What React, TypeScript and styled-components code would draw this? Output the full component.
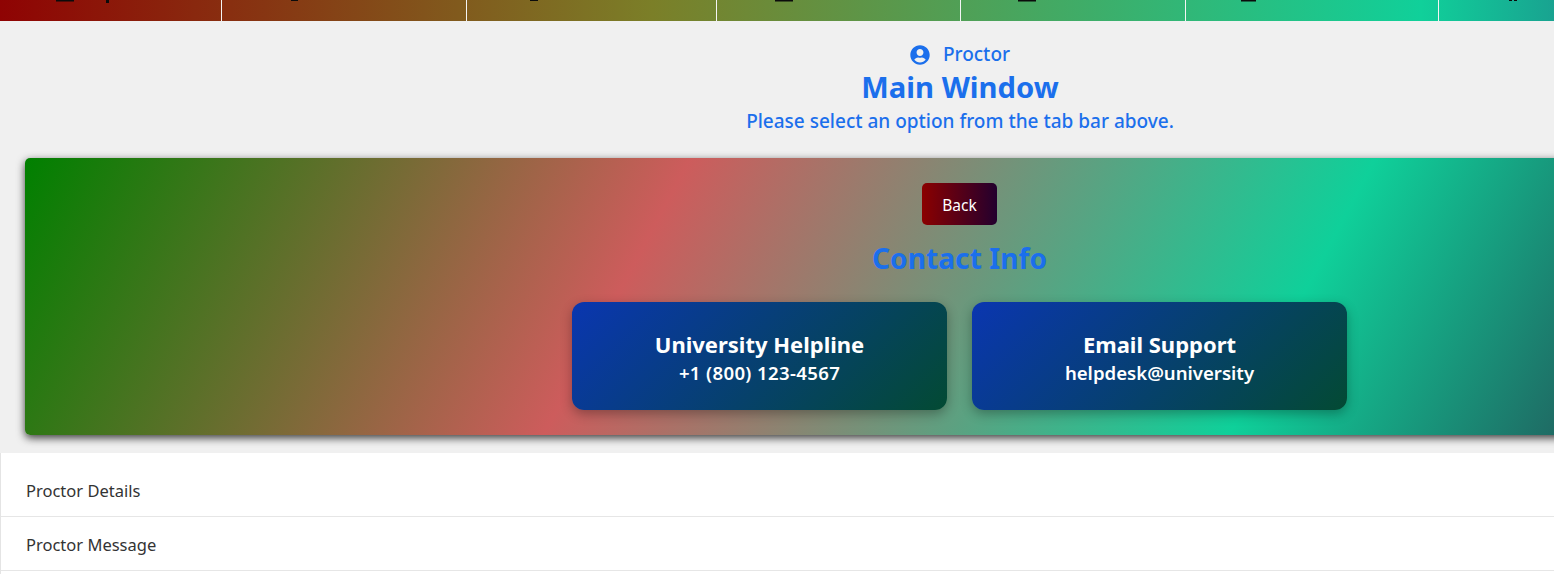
import React from "react";
import styled, { createGlobalStyle } from "styled-components";

const Global = createGlobalStyle`
  html, body { margin: 0; padding: 0; overflow: hidden; background: #f0f0f0; }
  body { font-family: "Noto Sans", "Open Sans", sans-serif; }
`;

const Page = styled.div`
  width: 1920px;
  height: 574px;
  overflow: hidden;
  background: #f0f0f0;
`;

const TabBar = styled.nav`
  display: flex;
  height: 21px;
  overflow: hidden;
  background: linear-gradient(91deg, #8f0303 0%, #7b7f28 34%, #10d09a 74%, #1a9c8f 82%, #14554f 100%);
`;

const Tab = styled.div<{ $w: number; $pad: number }>`
  flex: 0 0 ${(p) => p.$w}px;
  box-sizing: border-box;
  height: 21px;
  padding-left: ${(p) => p.$pad}px;
  border-right: 1px solid #f4f4f4;
  display: flex;
  align-items: flex-start;
  color: #111;
`;

const Sliver = styled.svg`
  display: block;
  width: 60px;
  height: 3px;
  fill: #0b0b0b;
`;

const Intro = styled.header`
  display: flex;
  flex-direction: column;
  align-items: center;
  padding-top: 20px;
  height: 137px;
  box-sizing: border-box;
  color: #1b6fec;
`;

const Role = styled.div`
  display: flex;
  align-items: center;
  gap: 13px;
  font-size: 19px;
  line-height: 27px;
  font-weight: 500;
  height: 27px;
`;

const Title = styled.h1`
  margin: -1px 0 0;
  font-size: 29.2px;
  line-height: 40px;
  font-weight: 700;
`;

const Subtitle = styled.p`
  margin: 1px 0 0;
  font-size: 19px;
  line-height: 26px;
  font-weight: 500;
`;

const Banner = styled.section`
  margin: 0 26px 0 25px;
  height: 277px;
  border-radius: 5px;
  box-sizing: border-box;
  padding-top: 25px;
  display: flex;
  flex-direction: column;
  align-items: center;
  background: linear-gradient(118deg, #008000 0%, #cd5c5c 33%, #0fd09a 67%, #2f022c 100%);
  box-shadow: 0 3px 9px rgba(0, 0, 0, 0.75);
`;

const BackButton = styled.button`
  width: 75px;
  height: 42px;
  border: none;
  border-radius: 5px;
  padding: 2px 0 0;
  color: #fff;
  font-family: inherit;
  font-size: 15.5px;
  background: linear-gradient(90deg, #8b0000, #23002e);
`;

const ContactTitle = styled.h2`
  margin: 11px 0 22px;
  color: #1b6fec;
  font-size: 28.2px;
  line-height: 44px;
  font-weight: 700;
`;

const Cards = styled.div`
  display: flex;
  gap: 25px;
`;

const Card = styled.article`
  width: 375px;
  height: 108px;
  border-radius: 12px;
  box-sizing: border-box;
  padding-top: 27px;
  text-align: center;
  color: #fff;
  background: linear-gradient(135deg, #0a36b0, #034a33);
  box-shadow: 0 4px 12px rgba(0, 0, 0, 0.3);
`;

const CardTitle = styled.h3`
  margin: 0;
  font-size: 22px;
  line-height: 30px;
  font-weight: 700;
`;

const CardText = styled.p<{ $spread?: boolean }>`
  margin: 0;
  font-size: 18.6px;
  line-height: 28px;
  font-weight: 600;
  letter-spacing: ${(p) => (p.$spread ? "0.35px" : "0")};
`;

const List = styled.ul`
  list-style: none;
  margin: 18px 0 0;
  padding: 10px 0 12px 0;
  background: #fff;
  border-left: 1px solid #e4e4e4;
`;

const Row = styled.li`
  height: 54px;
  box-sizing: border-box;
  padding: 2px 0 0 25px;
  display: flex;
  align-items: center;
  font-size: 16.5px;
  color: #333;
  border-bottom: 1px solid #e6e6e6;
`;

const UserIcon = () => (
  <svg width="20" height="20" viewBox="0 0 512 512" fill="currentColor" aria-hidden="true">
    <path d="M256 8C119 8 8 119 8 256s111 248 248 248 248-111 248-248S393 8 256 8zm0 96c48.600 0 88 39.400 88 88s-39.400 88-88 88-88-39.400-88-88 39.400-88 88-88zm0 344c-58.700 0-111.300-26.600-146.500-68.200 18.800-35.400 55.600-59.800 98.500-59.800 2.400 0 4.800.4 7.100 1.100 13 4.200 26.600 6.900 40.900 6.900s28-2.700 40.900-6.900c2.300-.7 4.700-1.100 7.100-1.100 42.900 0 79.700 24.400 98.500 59.800C367.300 421.400 314.700 448 256 448z" />
  </svg>
);

const tabs = [
  { w: 222, pad: 56, marks: [{ x: 0, w: 18, h: 1.5 }, { x: 50, w: 3, h: 3 }] },
  { w: 245, pad: 64, marks: [{ x: 5, w: 7, h: 1 }] },
  { w: 250, pad: 58, marks: [{ x: 5, w: 8, h: 1 }] },
  { w: 244, pad: 58, marks: [{ x: 0, w: 18, h: 1.5 }] },
  { w: 225, pad: 57, marks: [{ x: 0, w: 18, h: 1.5 }] },
  { w: 253, pad: 55, marks: [{ x: 0, w: 15, h: 1.5 }] },
  { w: 481, pad: 70, marks: [{ x: 0, w: 3, h: 1 }, { x: 5, w: 3, h: 1 }] },
];

export default function App() {
  return (
    <Page>
      <Global />
      <TabBar>
        {tabs.map((t, i) => (
          <Tab key={i} $w={t.w} $pad={t.pad}>
            <Sliver viewBox="0 0 60 3">
              {t.marks.map((m, j) => (
                <rect key={j} x={m.x} y="0" width={m.w} height={m.h} />
              ))}
            </Sliver>
          </Tab>
        ))}
      </TabBar>
      <Intro>
        <Role>
          <UserIcon />
          <span>Proctor</span>
        </Role>
        <Title>Main Window</Title>
        <Subtitle>Please select an option from the tab bar above.</Subtitle>
      </Intro>
      <Banner>
        <BackButton>Back</BackButton>
        <ContactTitle>Contact Info</ContactTitle>
        <Cards>
          <Card>
            <CardTitle>University Helpline</CardTitle>
            <CardText $spread>+1 (800) 123-4567</CardText>
          </Card>
          <Card>
            <CardTitle>Email Support</CardTitle>
            <CardText>helpdesk@university</CardText>
          </Card>
        </Cards>
      </Banner>
      <List>
        <Row>Proctor Details</Row>
        <Row>Proctor Message</Row>
      </List>
    </Page>
  );
}
